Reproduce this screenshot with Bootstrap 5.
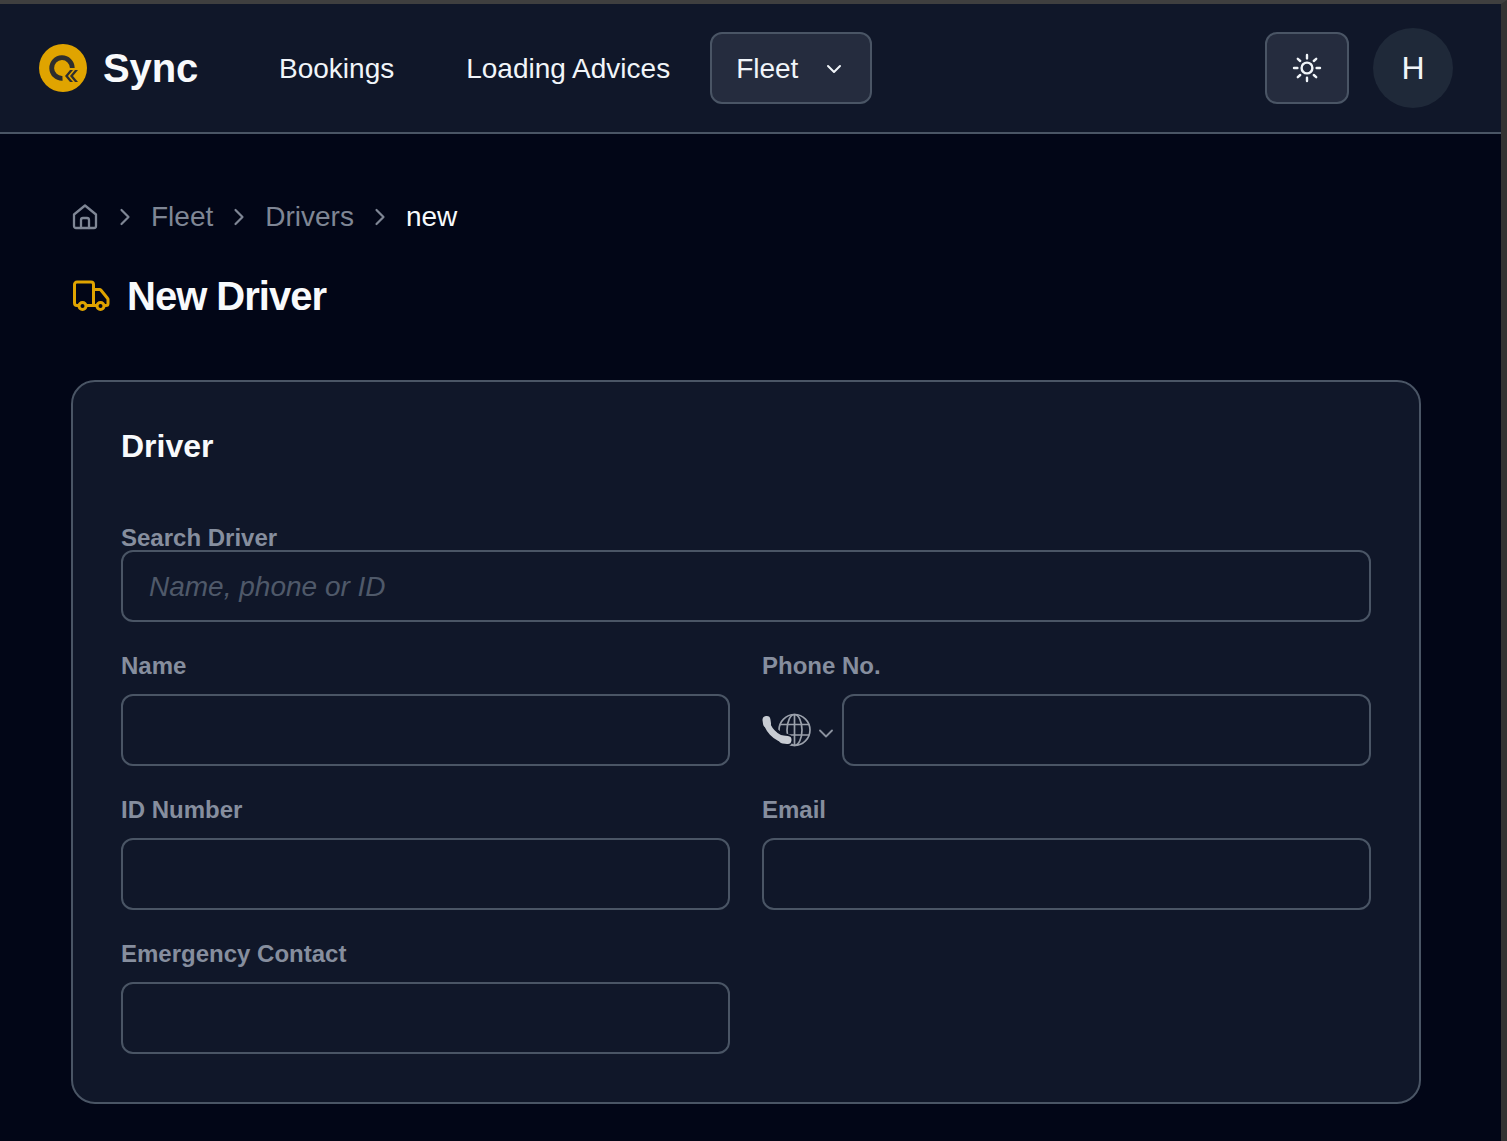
<!DOCTYPE html>
<html lang="en">
<head>
  <meta charset="UTF-8" />
  <title>New Driver</title>
  <link href="https://cdn.jsdelivr.net/npm/bootstrap@5.3.0/dist/css/bootstrap.min.css" rel="stylesheet">
  <style>
    html, body { height: 100%; }
    body { background: #020617; font-family: "Liberation Sans", Arial, sans-serif; color: #f8fafc; overflow: hidden; }
    .app-frame { min-height: 100%; border-top: 4px solid #3f3f3f; border-right: 6px solid #333; }
    .top-bar { height: 130px; padding: 0 48px 0 39px; background: #101729; border-bottom: 2px solid #4a5565; flex-wrap: nowrap; }
    .brand-link { font-size: 40px; font-weight: 700; color: #f8fafc; padding: 0; margin: 0 81px 0 0; gap: 16px; letter-spacing: -.15px; }
    .brand-link:hover { color: #f8fafc; }
    .top-link { font-size: 28px; line-height: 40px; color: #f1f5f9; text-decoration: none; padding-top: 2px; }
    .top-link.first-link { margin-right: 72px; }
    .top-link.second-link { margin-right: 40px; }
    .fleet-btn { width: 162px; height: 72px; padding: 2px 28px 0 24px; font-size: 28px; color: #f1f5f9; background: #252c3e; border: 2px solid #4a5565; border-radius: 12px; }
    .sun-btn { width: 84px; height: 72px; background: #252c3e; border: 2px solid #4a5565; border-radius: 12px; color: #f1f5f9; margin-right: 24px; padding: 0; }
    .avatar-disc { width: 80px; height: 80px; background: #1f2939; font-size: 32px; color: #f1f5f9; }
    .page-body { padding: 63px 80px 0 71px; }
    .crumbs { font-size: 28px; line-height: 40px; color: #7f8695; gap: 20px; margin-bottom: 35px; }
    .crumbs a { color: #7f8695; text-decoration: none; }
    .crumbs .now { color: #f8fafc; }
    .page-title { font-size: 40px; line-height: 48px; font-weight: 700; color: #f8fafc; gap: 16px; margin: 0 0 60px; padding-left: 2px; letter-spacing: -1px; }
    .form-panel { background: #101729; border: 2px solid #4a5565; border-radius: 24px; padding: 44px 48px 48px; color: #f8fafc; }
    .panel-title { font-size: 32px; line-height: 40px; font-weight: 700; margin: 0 0 58px; }
    .field-label { display: block; font-size: 24px; line-height: 28px; font-weight: 700; color: #868e9e; margin: 0; }
    .field-label.tight { margin-bottom: -2px; }
    .field-label.gap-under { margin-bottom: 14px; }
    .field-input, .field-input:focus { height: 72px; padding: 2px 26px 0; font-size: 28px; color: #f8fafc; background: #101729; border: 2px solid #4a5565; border-radius: 12px; box-shadow: none; }
    .field-input::placeholder { color: #4f5969; font-style: italic; }
    .field-row { --bs-gutter-x: 32px; --bs-gutter-y: 30px; }
    .phone-pick { width: 80px; flex: none; }
    .pick-caret { margin: 6px 0 0 7px; }
  </style>
</head>
<body>
  <div class="app-frame">
    <nav class="navbar top-bar d-flex align-items-center">
      <a class="navbar-brand brand-link d-flex align-items-center" href="#">
        <svg width="48" height="48" viewBox="0 0 48 48">
          <circle cx="24" cy="24" r="24" fill="#e0a400"/>
          <path d="M23.500 34.300A10.300 10.300 0 1 1 33.300 24" fill="none" stroke="#2e2e2e" stroke-width="4.800"/>
          <path d="M31 26l-5 6 5 6h3l-5-6 5-6zM36 26l-5 6 5 6h3l-5-6 5-6z" fill="#2e2e2e"/>
        </svg>
        Sync
      </a>
      <a class="top-link first-link" href="#">Bookings</a>
      <a class="top-link second-link" href="#">Loading Advices</a>
      <button class="btn fleet-btn d-flex align-items-center justify-content-between" type="button">
        Fleet
        <svg width="16" height="10" viewBox="0 0 16 10" fill="none" stroke="currentColor" stroke-width="2" stroke-linecap="round" stroke-linejoin="round"><path d="M2 2l6 6 6-6"/></svg>
      </button>
      <div class="ms-auto d-flex align-items-center">
        <button class="btn sun-btn d-flex align-items-center justify-content-center" type="button" aria-label="Theme">
          <svg width="32" height="32" viewBox="0 0 32 32" fill="none" stroke="currentColor" stroke-width="2.400" stroke-linecap="round"><circle cx="16" cy="16" r="5.400"/><path d="M16 3v3.400M16 25.600V29M3 16h3.400M25.600 16H29M6.800 6.800l2.400 2.200M22.800 23l2.400 2.200M6.800 25.200l2.400-2.200M22.800 9l2.400-2.200"/></svg>
        </button>
        <div class="avatar-disc rounded-circle d-flex align-items-center justify-content-center">H</div>
      </div>
    </nav>

    <main class="page-body">
      <div class="crumbs d-flex align-items-center">
        <svg width="28" height="28" viewBox="0 0 28 28" fill="none" stroke="currentColor" stroke-width="2.300" stroke-linecap="round" stroke-linejoin="round"><path d="M3 11.500L14 2.500l11 9V23a2 2 0 0 1-2 2H5a2 2 0 0 1-2-2z"/><path d="M10 25v-8a2 2 0 0 1 2-2h4a2 2 0 0 1 2 2v8"/></svg>
        <svg width="12" height="18" viewBox="0 0 12 18" fill="none" stroke="currentColor" stroke-width="2.200" stroke-linecap="round" stroke-linejoin="round"><path d="M2.500 2l7 7-7 7"/></svg>
        <a href="#">Fleet</a>
        <svg width="12" height="18" viewBox="0 0 12 18" fill="none" stroke="currentColor" stroke-width="2.200" stroke-linecap="round" stroke-linejoin="round"><path d="M2.500 2l7 7-7 7"/></svg>
        <a href="#">Drivers</a>
        <svg width="12" height="18" viewBox="0 0 12 18" fill="none" stroke="currentColor" stroke-width="2.200" stroke-linecap="round" stroke-linejoin="round"><path d="M2.500 2l7 7-7 7"/></svg>
        <span class="now">new</span>
      </div>

      <h1 class="page-title d-flex align-items-center">
        <svg width="38" height="32" viewBox="0 0 38 32" fill="none" stroke="#e0a400" stroke-width="3" stroke-linecap="round" stroke-linejoin="round"><path d="M5 25.500H4a2.500 2.500 0 0 1-2.500-2.500V4.500A2.500 2.500 0 0 1 4 2h14a2.500 2.500 0 0 1 2.500 2.500V25.500"/><path d="M14 25.500h9M20.500 9.500h6a2 2 0 0 1 1.500.7l6.500 8a2 2 0 0 1 .5 1.300V23.500a2 2 0 0 1-2 2h-1"/><circle cx="9.500" cy="26" r="3.500"/><circle cx="27.500" cy="26" r="3.500"/></svg>
        New Driver
      </h1>

      <section class="form-panel">
        <h2 class="panel-title">Driver</h2>
        <label class="field-label tight" for="searchDriver">Search Driver</label>
        <input class="form-control field-input" id="searchDriver" placeholder="Name, phone or ID">
        <div class="row field-row mt-0">
          <div class="col-6">
            <label class="field-label gap-under" for="driverName">Name</label>
            <input class="form-control field-input" id="driverName">
          </div>
          <div class="col-6">
            <label class="field-label gap-under" for="driverPhone">Phone No.</label>
            <div class="d-flex align-items-center">
              <div class="phone-pick d-flex align-items-center">
                <svg width="50" height="34" viewBox="0 0 50 34">
                  <g fill="none" stroke="#9aa0ab" stroke-width="1.700">
                    <circle cx="32.500" cy="17" r="15.500"/>
                    <ellipse cx="32.500" cy="17" rx="7.500" ry="15.500"/>
                    <path d="M32.500 1.500v31M18 11.500h29M18 22h29"/>
                  </g>
                  <path d="M4.500 7C4.500 15 13 25.500 25 27" fill="none" stroke="#101729" stroke-width="12" stroke-linecap="round"/>
                  <path d="M4.500 7C4.500 15 13 25.500 25 27" fill="none" stroke="#c8ccd3" stroke-width="6.400" stroke-linecap="round"/>
                  <path d="M4.500 7L5 10.500M21 26.500L25.500 27" fill="none" stroke="#c8ccd3" stroke-width="8" stroke-linecap="round"/>
                </svg>
                <svg class="pick-caret" width="14" height="9" viewBox="0 0 14 9" fill="none" stroke="#8a919e" stroke-width="1.800" stroke-linecap="round" stroke-linejoin="round"><path d="M1 1.500L7 7.500l6-6"/></svg>
              </div>
              <input class="form-control field-input" id="driverPhone">
            </div>
          </div>
          <div class="col-6">
            <label class="field-label gap-under" for="idNumber">ID Number</label>
            <input class="form-control field-input" id="idNumber">
          </div>
          <div class="col-6">
            <label class="field-label gap-under" for="driverEmail">Email</label>
            <input class="form-control field-input" id="driverEmail">
          </div>
          <div class="col-6">
            <label class="field-label gap-under" for="emergencyContact">Emergency Contact</label>
            <input class="form-control field-input" id="emergencyContact">
          </div>
        </div>
      </section>
    </main>
  </div>
  <script src="https://cdn.jsdelivr.net/npm/bootstrap@5.3.0/dist/js/bootstrap.bundle.min.js"></script>
</body>
</html>
